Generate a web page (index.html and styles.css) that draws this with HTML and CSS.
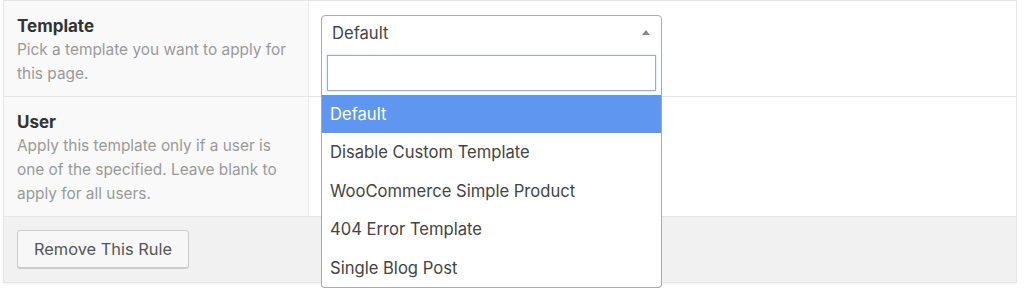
FILE: index.html
```html
<!DOCTYPE html>
<html>
<head>
<meta charset="utf-8">
<link rel="stylesheet" href="styles.css">
</head>
<body>
<div class="rule">
  <div class="row">
    <div class="label-cell">
      <div class="label">Template</div>
      <div class="desc">Pick a template you want to apply for this page.</div>
    </div>
    <div class="field-cell">
      <div class="select2">
        <div class="selection">
          <span class="rendered">Default</span>
          <span class="arrow"></span>
        </div>
        <div class="dropdown">
          <div class="search"><input class="search-field" type="text"></div>
          <ul class="results">
            <li class="option highlighted">Default</li>
            <li class="option">Disable Custom Template</li>
            <li class="option">WooCommerce Simple Product</li>
            <li class="option">404 Error Template</li>
            <li class="option">Single Blog Post</li>
          </ul>
        </div>
      </div>
    </div>
  </div>
  <div class="row">
    <div class="label-cell">
      <div class="label">User</div>
      <div class="desc">Apply this template only if a user is one of the specified. Leave blank to apply for all users.</div>
    </div>
    <div class="field-cell"></div>
  </div>
  <div class="footer">
    <button class="button">Remove This Rule</button>
  </div>
</div>
</body>
</html>
```

FILE: styles.css
```css
* { box-sizing: border-box; }
html, body { margin: 0; padding: 0; background: #fff; }
body {
  min-height: 299px;
  font-family: Inter, "Noto Sans", "Liberation Sans", sans-serif;
  color: #444;
}
.rule {
  margin: 0 7px 0 3px;
  border: 1px solid #e5e5e5;
  box-shadow: 0 1px 2px rgba(0,0,0,0.06);
  background: #fff;
}
.row {
  display: flex;
  border-bottom: 1px solid #e5e5e5;
}
.label-cell {
  width: 305px;
  flex: none;
  background: #f9f9f9;
  border-right: 1px solid #ececec;
  padding: 13px 16px 10px 13px;
  line-height: 24px;
}
.label {
  font-size: 17px;
  font-weight: 700;
  color: #333;
}
.desc {
  font-size: 15.4px;
  color: #999;
}
.field-cell {
  flex: 1;
  padding: 14px 12px;
  position: relative;
}
.select2 {
  position: relative;
  width: 341px;
  font-size: 16.6px;
}
.selection {
  height: 35px;
  border: 1px solid #aaa;
  border-radius: 4px 4px 0 0;
  background: #fff;
  display: flex;
  align-items: center;
  padding: 0 10px;
  color: #444;
}
.rendered { flex: 1; }
.arrow {
  width: 0;
  height: 0;
  border-style: solid;
  border-width: 0 4px 5px 4px;
  border-color: transparent transparent #888 transparent;
  margin-right: 1px;
}
.dropdown {
  position: absolute;
  top: 34px;
  left: 0;
  width: 341px;
  background: #fff;
  border: 1px solid #aaa;
  border-top: none;
  border-radius: 0 0 4px 4px;
  z-index: 5;
}
.search {
  padding: 6px 5px 4px 5px;
}
.search-field {
  display: block;
  width: 100%;
  height: 36px;
  border: 1px solid #aaa;
  box-shadow: 0 0 2px rgba(120,160,200,0.5);
  outline: none;
  font: inherit;
}
.results {
  list-style: none;
  margin: 0;
  padding: 0;
}
.option {
  height: 38.4px;
  line-height: 39px;
  padding: 0 8px;
  color: #444;
}
.option.highlighted {
  background: #5f97f0;
  color: #fff;
}
.footer {
  background: #f1f1f1;
  padding: 13px 13px 14px 13px;
}
.button {
  font-family: inherit;
  font-size: 16.4px;
  color: #555;
  background: #f7f7f7;
  border: 1px solid #ccc;
  border-radius: 3px;
  box-shadow: 0 1px 0 #ccc;
  height: 38px;
  padding: 0 16px;
  cursor: pointer;
}
```
